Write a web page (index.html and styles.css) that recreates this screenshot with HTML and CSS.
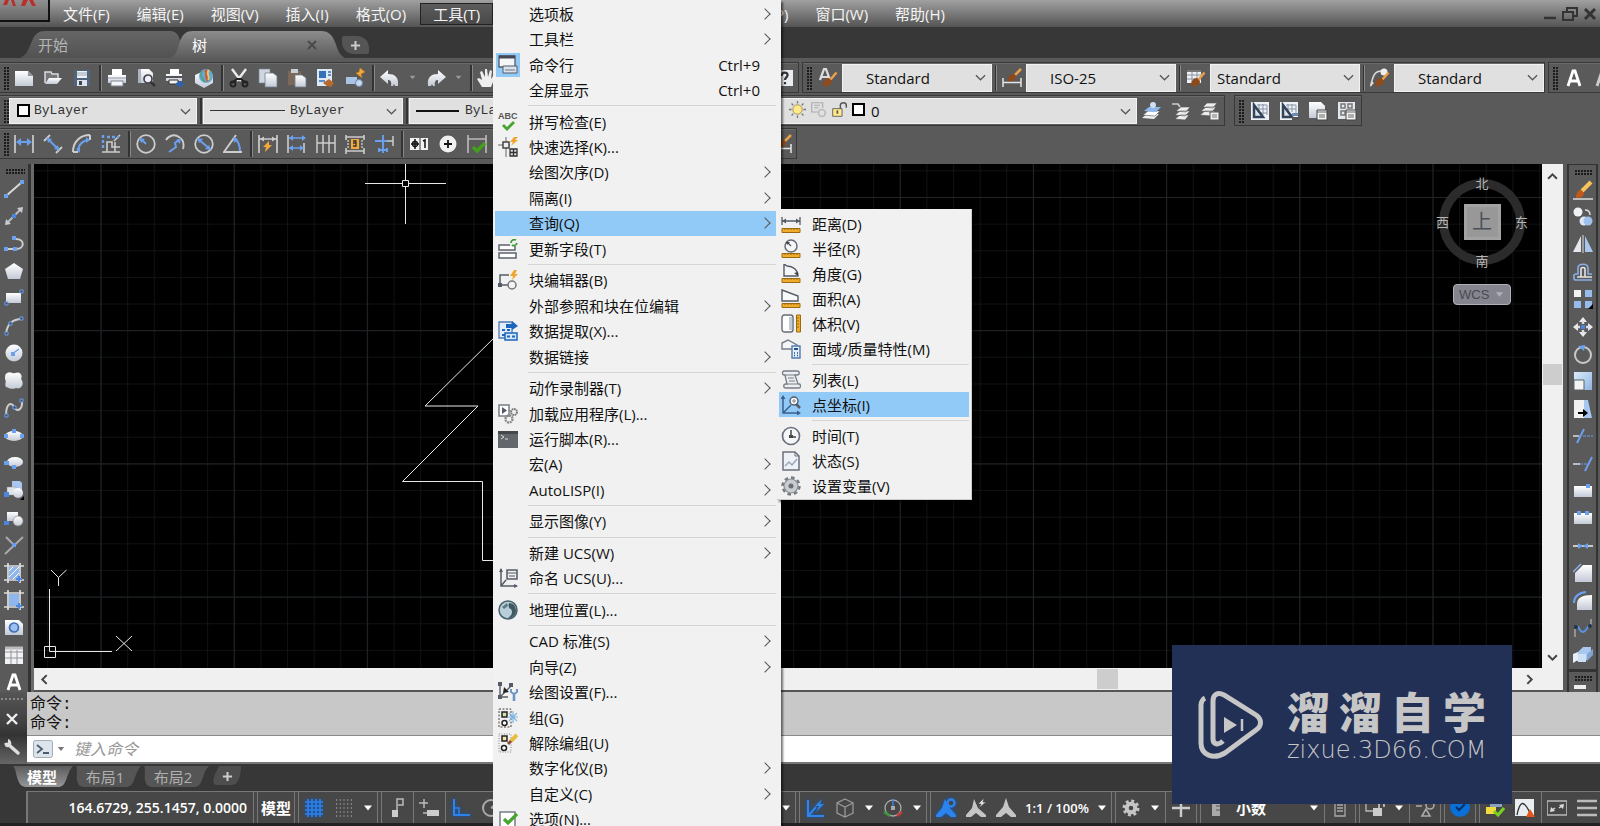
FILE: index.html
```html
<!DOCTYPE html>
<html lang="zh-CN">
<head>
<meta charset="utf-8">
<title>CAD 工作区</title>
<link rel="stylesheet" href="styles.css">
</head>
<body>
<svg class="defs" aria-hidden="true">
  <defs>
    <linearGradient id="gw" x1="0" y1="0" x2="0" y2="1"><stop offset="0" stop-color="#fff"/><stop offset="1" stop-color="#c3cad6"/></linearGradient>
    <linearGradient id="gb" x1="0" y1="0" x2="1" y2="1"><stop offset="0" stop-color="#dcebfb"/><stop offset="1" stop-color="#8db4e2"/></linearGradient>
    <linearGradient id="tabOn" x1="0" y1="0" x2="0" y2="1"><stop offset="0" stop-color="#8c8c8c"/><stop offset="1" stop-color="#5c5c5c"/></linearGradient>
    <linearGradient id="tabOff" x1="0" y1="0" x2="0" y2="1"><stop offset="0" stop-color="#666"/><stop offset="1" stop-color="#525252"/></linearGradient>
    <linearGradient id="tabLow" x1="0" y1="0" x2="0" y2="1"><stop offset="0" stop-color="#5c5c5c"/><stop offset="1" stop-color="#969696"/></linearGradient>
  </defs>
  <!-- common -->
  <symbol id="chev" viewBox="0 0 12 12"><path d="M1 3.500l5 5 5-5" fill="none" stroke="#555" stroke-width="1.300"/></symbol>
  <symbol id="tri" viewBox="0 0 10 10"><path d="M1 2.500h8l-4 5z" fill="currentColor"/></symbol>
  <symbol id="plus" viewBox="0 0 12 12"><path d="M6 1v10M1 6h10" stroke="#ccc" stroke-width="2.200"/></symbol>
  <symbol id="brush" viewBox="0 0 20 20"><path d="M18.500 4.500l-6 7" stroke="#e8a04a" stroke-width="2.500"/><path d="M5 18c0-5 2-8 6-8l3 3c0 4-4 6-9 5z" fill="#8d4a1c"/></symbol>
  <!-- standard toolbar -->
  <symbol id="new" viewBox="0 0 20 20"><path d="M1 3h13l5 5v10H1z" fill="url(#gw)"/><path d="M14 3v5h5" fill="#8f959d"/></symbol>
  <symbol id="open" viewBox="0 0 20 20"><path d="M2 15V4h6l1 2h6v4" fill="#777" stroke="#d7dde5" stroke-width="1.500"/><path d="M2 16l4-6h13l-5 6z" fill="url(#gw)"/></symbol>
  <symbol id="save" viewBox="0 0 20 20"><path d="M2 2h16v16H2z" fill="#50647c"/><path d="M5 3h10v7H5z" fill="#eef1f5"/><path d="M5 5h10M5 7h10" stroke="#9aa6b5"/><path d="M5 12h10v6H5z" fill="#dfe4ea"/><path d="M7 13h3v4H7z" fill="#384656"/></symbol>
  <symbol id="print" viewBox="0 0 20 20"><path d="M5 1h10v6H5z" fill="#fff"/><path d="M1 7h18v8H1z" fill="url(#gw)"/><path d="M1 10h18" stroke="#8e98a5"/><path d="M4 13h12v5H4z" fill="#f4f6f8" stroke="#7c8795"/></symbol>
  <symbol id="preview" viewBox="0 0 20 20"><path d="M2 1h11l4 4v10H2z" fill="url(#gw)"/><path d="M2 1h3v14H2" fill="#aab3bf"/><circle cx="12" cy="11" r="4" fill="#eef" stroke="#444" stroke-width="1.700"/><path d="M15 14l4 4" stroke="#333" stroke-width="2.500"/></symbol>
  <symbol id="plot" viewBox="0 0 20 20"><path d="M5 1h9v5H5z" fill="#fff"/><path d="M1 6h16v7H1z" fill="url(#gw)"/><path d="M1 9h16" stroke="#222" stroke-width="1.500"/><path d="M4 12h9v4H4z" fill="#f2f2f2" stroke="#333"/><path d="M11 16h8M15 13v6" stroke="#2b64b5" stroke-width="2.500"/></symbol>
  <symbol id="globe" viewBox="0 0 20 20"><path d="M1 7l9-4 9 4v8l-9 5-9-5z" fill="url(#gw)"/><circle cx="12" cy="8" r="7" fill="#65a7d8"/><path d="M11 2c4 3-1 5 3 11" stroke="#d9542b" stroke-width="2.500" fill="none"/><path d="M15 2c-4 4 2 6-1 10" stroke="#f2cf4a" stroke-width="1.700" fill="none"/><path d="M8 3c-3 4 0 7 3 11" stroke="#4da36a" stroke-width="1.500" fill="none"/></symbol>
  <symbol id="cut" viewBox="0 0 20 20"><path d="M3 1l9 12M17 1L8 13" stroke="#e8e8e8" stroke-width="2.500"/><path d="M3 15l5-4h4l5 4" stroke="#222" stroke-width="2" fill="none"/><circle cx="4" cy="16" r="2.500" fill="none" stroke="#222" stroke-width="1.900"/><circle cx="16" cy="16" r="2.500" fill="none" stroke="#222" stroke-width="1.900"/></symbol>
  <symbol id="copy" viewBox="0 0 20 20"><path d="M1 1h11v14H1z" fill="#cfd6df" stroke="#7a8695" stroke-width=".7"/><path d="M7 5h8l4 3v11H7z" fill="url(#gw)" stroke="#6f7b8a" stroke-width=".8"/></symbol>
  <symbol id="paste" viewBox="0 0 20 20"><path d="M1 3h13v14H1z" fill="#7b6858"/><path d="M4 1h7v4H4z" fill="#c9cfd6"/><path d="M8 7h7l4 3v9H8z" fill="url(#gw)" stroke="#6f7b8a" stroke-width=".8"/></symbol>
  <symbol id="match" viewBox="0 0 20 20"><path d="M1 1h15v17H1z" fill="#dfe9f5"/><path d="M3 3h7v7H3z" fill="#3270b8"/><path d="M12 4h3M12 7h3M3 13h6" stroke="#3270b8" stroke-width="1.500"/><path d="M7 15l6-4 5 4-3 4-4-1z" fill="#b7692b"/></symbol>
  <symbol id="blk" viewBox="0 0 20 20"><path d="M1 9h11v7H1z" fill="#aac4e6"/><circle cx="14" cy="15" r="3.500" fill="#c9d9ee" stroke="#6b88b0"/><path d="M15 0l5 4-4 2 1 4-6-5 3-1z" fill="#f3a83a" stroke="#c97a16" stroke-width=".6"/></symbol>
  <symbol id="undo" viewBox="0 0 20 20"><path d="M0 9l8-7v4c7 0 11 3 10 12h-3l-1-2-1 2h-2c1-5-1-6-3-6v4z" fill="url(#gw)"/></symbol>
  <symbol id="redo" viewBox="0 0 20 20"><path d="M20 9l-8-7v4C5 6 1 9 2 18h3l1-2 1 2h2c-1-5 1-6 3-6v4z" fill="url(#gw)"/></symbol>
  <symbol id="hand" viewBox="0 0 20 20"><path d="M6 19L1 11l2-1 3 2L4 4l2-1 3 6V1h2l1 8 2-7 2 1-1 8 2-3 2 1-4 10z" fill="#eee"/></symbol>
  <symbol id="help" viewBox="0 0 20 20"><path d="M3 2h16v16H3z" fill="#e9edf2"/><path d="M7.500 8c0-5 7-4 6-.5C13 9.500 11 9.500 11 12M11 14v2.200" fill="none" stroke="#333" stroke-width="2.200"/></symbol>
  <symbol id="txtst" viewBox="0 0 20 20"><path d="M2 12L6 1h2l4 11M4 9h6" stroke="#ddd" stroke-width="2.200" fill="none"/><use href="#brush"/></symbol>
  <symbol id="dimst" viewBox="0 0 20 20"><path d="M1 10v9M19 10v9M1 14.500h18" stroke="#e5e5e5" stroke-width="1.500"/><path d="M19 1l-6 6" stroke="#e8a04a" stroke-width="2.500"/><path d="M6 13c0-5 2-7 6-7l2 2c0 4-3 6-8 5z" fill="#8d4a1c"/></symbol>
  <symbol id="tabst" viewBox="0 0 20 20"><path d="M1 2h14v13H1z" fill="#eef1f5"/><path d="M1 3h14" stroke="#777" stroke-width="2"/><path d="M1 7h14M1 11h14M6 4v11M11 4v11" stroke="#8992a0"/><use href="#brush"/></symbol>
  <symbol id="leadst" viewBox="0 0 20 20"><path d="M1 18C3 4 7 3 12 3" fill="none" stroke="#ddd" stroke-width="1.500"/><path d="M0 19l1-6 3 2z" fill="#ddd"/><circle cx="14" cy="4" r="3.500" fill="#eee"/><use href="#brush"/></symbol>
  <symbol id="bigA" viewBox="0 0 20 20"><path d="M4 18L9 3h2l5 15M6 13h8" stroke="currentColor" stroke-width="2.800" fill="none"/></symbol>
  <!-- layers -->
  <symbol id="lay1" viewBox="0 0 20 20"><path d="M0 17l5-4h12l-5 5z" fill="#eee"/><path d="M1 14l5-4h12l-5 5z" fill="#fff" stroke="#555" stroke-width=".6"/><path d="M2 10l5-4h12l-5 5z" fill="#8db8ec"/><circle cx="11" cy="4" r="3" fill="#cfe0f5"/></symbol>
  <symbol id="lay2" viewBox="0 0 20 20"><path d="M4 18l5-4h9l-4 5zM4 14l5-4h10l-5 5zM5 10l5-4h9l-4 5z" fill="#eee" stroke="#555" stroke-width=".6"/><path d="M1 3h6l2 3" fill="none" stroke="#ccc" stroke-width="1.700"/></symbol>
  <symbol id="lay3" viewBox="0 0 20 20"><path d="M0 14l5-4h10l-4 5zM1 10l5-4h10l-4 5zM3 6l4-4h10l-4 5z" fill="#eee" stroke="#555" stroke-width=".6"/><path d="M10 11h9v8h-9z" fill="#eee" stroke="#555"/><path d="M12 14h5M12 16h5" stroke="#777"/></symbol>
  <symbol id="sun" viewBox="0 0 20 20"><path d="M10 0v3M10 17v3M0 10h3M17 10h3M3 3l2 2M15 15l2 2M17 3l-2 2M3 17l2-2" stroke="#777" stroke-width="1.500"/><circle cx="10" cy="10" r="5.500" fill="#ffe98a" stroke="#9c8743"/></symbol>
  <symbol id="vp" viewBox="0 0 20 20"><path d="M2 2h13v6M2 2v11h7M5 5h7M5 8h5" fill="none" stroke="#aaa" stroke-width="1.300"/><circle cx="14" cy="14" r="4" fill="none" stroke="#bbb" stroke-width="2"/></symbol>
  <symbol id="lock" viewBox="0 0 20 20"><path d="M2 9h11v9H2z" fill="#ffe98a" stroke="#555"/><path d="M11 9V5c0-4 7-4 7 0v3" fill="none" stroke="#555" stroke-width="1.700"/><path d="M7.500 11v4" stroke="#555" stroke-width="2"/></symbol>
  <symbol id="ref1" viewBox="0 0 20 20"><path d="M1 1h18v18H1z" fill="#eef2f7"/><path d="M7 4h10v10M7 8h10M10 12h7M9 3v9M13 3v11" stroke="#8794a5" fill="none"/><path d="M4 4v12h9z" fill="#dde3ea" stroke="#34435a" stroke-width="2.500"/></symbol>
  <symbol id="ref2" viewBox="0 0 20 20"><path d="M1 1h18v18H1z" fill="#eef2f7"/><path d="M7 4h10v8M7 8h10M9 3v7M13 3v8" stroke="#8794a5" fill="none"/><path d="M4 4v12h9z" fill="#dde3ea" stroke="#34435a" stroke-width="2.500"/><path d="M13 12h6v3h-6z" fill="#6c8bb8"/><path d="M13 16h7v3h-7z" fill="#555"/></symbol>
  <symbol id="ref3" viewBox="0 0 20 20"><path d="M1 1h12l4 4v12H1z" fill="url(#gw)"/><path d="M9 9h10v10H9z" fill="#f4f4f4" stroke="#444"/><path d="M9 11h10M11 14h6M11 16h6" stroke="#666"/></symbol>
  <symbol id="ref4" viewBox="0 0 20 20"><path d="M1 1h17v17H1z" fill="#e4e8ee"/><path d="M4 3h4v4H4zM11 3h4v4h-4zM4 10h4v4H4z" fill="none" stroke="#777" stroke-width="1.500"/><path d="M9 9h10v10H9z" fill="#f4f4f4" stroke="#444"/><path d="M9 11h10M11 14h6M11 16h6" stroke="#666"/></symbol>
  <!-- dimension -->
  <symbol id="d1" viewBox="0 0 20 20"><path d="M1 1v18M19 1v18" stroke="#ccc" stroke-width="1.700"/><path d="M3 8h14" stroke="#6ba0ee" stroke-width="2"/><path d="M2 8l5-4v8zM18 8l-5-4v8z" fill="#6ba0ee"/></symbol>
  <symbol id="d2" viewBox="0 0 20 20"><path d="M1 7l6-6M13 19l6-6" stroke="#ccc" stroke-width="1.900"/><path d="M4 4l12 12" stroke="#6ba0ee" stroke-width="2"/><path d="M4 4l5 1-4 4zM16 16l-5-1 4-4z" fill="#6ba0ee"/></symbol>
  <symbol id="d3" viewBox="0 0 20 20"><path d="M1 18C1 8 8 1 18 1M1 18h5M18 1v5" stroke="#ccc" stroke-width="2" fill="none"/><path d="M6 17C6 11 11 6 17 6" stroke="#6ba0ee" stroke-width="2" fill="none"/><path d="M4 15l4-2v6zM14 3l4 3-4 3z" fill="#6ba0ee"/></symbol>
  <symbol id="d4" viewBox="0 0 20 20"><path d="M1 18h18M6 18V8h5v5h8M14 8v10M19 1l-6 6" stroke="#ccc" stroke-width="1.600" fill="none"/><path d="M2 1v14M6 3h12" stroke="#6ba0ee" stroke-width="2.400" stroke-dasharray="3 2"/></symbol>
  <symbol id="d5" viewBox="0 0 20 20"><circle cx="10" cy="10" r="8.800" fill="none" stroke="#ccc" stroke-width="1.800"/><path d="M10 10L5 5" stroke="#6ba0ee" stroke-width="2"/><path d="M3 4l6 1-4 4z" fill="#6ba0ee"/></symbol>
  <symbol id="d6" viewBox="0 0 20 20"><path d="M1 6c3-5 9-6 13-3 5 3 5 8 4 12" fill="none" stroke="#ccc" stroke-width="1.900"/><path d="M4 18l7-5-1-4 4-3" fill="none" stroke="#6ba0ee" stroke-width="2"/><path d="M16 4l-1 6-4-4z" fill="#6ba0ee"/></symbol>
  <symbol id="d7" viewBox="0 0 20 20"><circle cx="10" cy="10" r="8.800" fill="none" stroke="#ccc" stroke-width="1.800"/><path d="M4 5l12 10" stroke="#6ba0ee" stroke-width="2"/><path d="M3 4l6 1-4 4zM17 16l-6-1 4-4z" fill="#6ba0ee"/></symbol>
  <symbol id="d8" viewBox="0 0 20 20"><path d="M13 1L1 18h18" fill="none" stroke="#ccc" stroke-width="1.900"/><path d="M12 5c4 3 5 7 5 12" fill="none" stroke="#6ba0ee" stroke-width="2"/><path d="M10 3l5 2-4 4z" fill="#6ba0ee"/></symbol>
  <symbol id="d9" viewBox="0 0 20 20"><path d="M1 1v18M19 1v18M1 5h18" stroke="#ccc" stroke-width="1.700"/><path d="M2 5l4-2.500v5zM18 5l-4-2.500v5z" fill="#ccc"/><path d="M11 7l-6 6h3l-1 5 7-7h-3z" fill="#f3a83a"/></symbol>
  <symbol id="d10" viewBox="0 0 20 20"><path d="M1 1v18M17 9v10" stroke="#ccc" stroke-width="1.600"/><path d="M2 4h16M2 14h14" stroke="#6ba0ee" stroke-width="1.700"/><path d="M2 4l4-3v6zM19 4l-4-3v6zM2 14l4-3v6zM17 14l-4-3v6z" fill="#6ba0ee"/></symbol>
  <symbol id="d11" viewBox="0 0 20 20"><path d="M1 1v18M7 1v18M13 1v18M19 1v18M1 9h18" stroke="#ccc" stroke-width="1.500"/></symbol>
  <symbol id="d12" viewBox="0 0 20 20"><path d="M1 1v5M19 1v5M1 3h18M1 14v6M19 14v6M1 17h18" stroke="#ccc" stroke-width="1.600"/><path d="M6 5h8v10H6z" fill="#f3a83a"/><path d="M8 7h3v2h-3h3v3H8" stroke="#333" fill="none" stroke-width="1.300"/><path d="M3 6v8M17 6v8" stroke="#eee" stroke-dasharray="2 1"/></symbol>
  <symbol id="d13" viewBox="0 0 20 20"><path d="M9 1v18M1 7h12M5 14v4M13 14v4M5 16h8" stroke="#6ba0ee" stroke-width="1.900"/><path d="M19 2v10M13 7h6" stroke="#ccc" stroke-width="1.500"/></symbol>
  <symbol id="d14" viewBox="0 0 20 20"><path d="M1 4h18v12H1z" fill="#f2f2f2"/><path d="M11 4v12" stroke="#333"/><path d="M6 5v10M2 10h8M14 7l2-1v8" stroke="#111" stroke-width="1.500" fill="none"/><circle cx="6" cy="10" r="2.500" fill="none" stroke="#111" stroke-width="1.300"/></symbol>
  <symbol id="d15" viewBox="0 0 20 20"><circle cx="10" cy="10" r="8.500" fill="#f0f0f0"/><path d="M10 6v8M6 10h8" stroke="#111" stroke-width="1.800"/></symbol>
  <symbol id="d16" viewBox="0 0 20 20"><path d="M1 1v18M19 1v18M1 5h18" stroke="#bbb" stroke-width="1.600"/><path d="M6 13l4 4 8-8" stroke="#41a01c" stroke-width="3.500" fill="none"/></symbol>
  <!-- draw tools -->
  <symbol id="l1" viewBox="0 0 20 20"><path d="M2 17L18 3" stroke="#d5d8dc" stroke-width="2"/><path d="M0 15h4v4H0zM16 1h4v4h-4z" fill="#6ba0ee"/></symbol>
  <symbol id="l2" viewBox="0 0 20 20"><path d="M3 17L17 3" stroke="#b9bdc3" stroke-width="2"/><path d="M1 19l1-6 5 5zM19 1l-1 6-5-5z" fill="#c9ccd0"/><path d="M8 8h4v4H8z" fill="#4c86df"/></symbol>
  <symbol id="l3" viewBox="0 0 20 20"><path d="M2 15h10c9 0 9-10 0-10h-2" fill="none" stroke="#ccc" stroke-width="2"/><path d="M0 13h4v4H0zM9 13h4v4H9zM8 2h4v4H8z" fill="#6ba0ee"/></symbol>
  <symbol id="l4" viewBox="0 0 20 20"><path d="M10 2l9 6-3 10H4L1 8z" fill="url(#gw)"/></symbol>
  <symbol id="l5" viewBox="0 0 20 20"><path d="M2 5h15v10H2z" fill="url(#gw)"/><path d="M16 2h3v3h-3zM1 14h3v3H1z" fill="#445" stroke="#6ba0ee"/></symbol>
  <symbol id="l6" viewBox="0 0 20 20"><path d="M2 18C3 8 8 3 18 3" fill="none" stroke="#ccc" stroke-width="2"/><path d="M1 16h3v3H1zM5 6h3v3H5zM16 1h3v3h-3z" fill="#445" stroke="#6ba0ee"/></symbol>
  <symbol id="l7" viewBox="0 0 20 20"><circle cx="10" cy="10" r="8.500" fill="url(#gw)"/><path d="M8 11l7-5" stroke="#6ba0ee" stroke-width="1.500"/><path d="M7 9h4v4H7z" fill="#6ba0ee"/></symbol>
  <symbol id="l8" viewBox="0 0 20 20"><path d="M3 2c4-2 5 1 8 0 5-2 8 2 6 6 4 5 0 11-5 9-4 2-7 0-10-1-2-3 1-5-1-8 0-3 0-5 2-6z" fill="url(#gw)"/></symbol>
  <symbol id="l9" viewBox="0 0 20 20"><path d="M2 18C2 4 8 4 10 9s9 4 8-7" fill="none" stroke="#ccc" stroke-width="2"/><path d="M1 16h3v3H1zM9 8h3v3H9zM16 1h3v3h-3z" fill="#445" stroke="#6ba0ee"/></symbol>
  <symbol id="l10" viewBox="0 0 20 20"><ellipse cx="10" cy="10" rx="9" ry="5" fill="url(#gw)"/><path d="M0 8h4v4H0zM16 8h4v4h-4zM8 3h4v4H8z" fill="#6ba0ee"/></symbol>
  <symbol id="l11" viewBox="0 0 20 20"><ellipse cx="11" cy="9" rx="8" ry="5" fill="url(#gw)"/><path d="M0 8h5v4H0zM8 12h4v4H8z" fill="#6ba0ee"/></symbol>
  <symbol id="l12" viewBox="0 0 20 20"><path d="M8 1h8l2 2v7H8z" fill="#a9c6ee"/><path d="M3 7h9v8H3z" fill="#dfe4ea" stroke="#888" stroke-width=".5"/><circle cx="14" cy="13" r="5" fill="url(#gw)"/><path d="M0 12h5v5H0z" fill="#4c86df"/><path d="M20 16v4h-4z" fill="#000"/></symbol>
  <symbol id="l13" viewBox="0 0 20 20"><path d="M3 4h11v9H3z" fill="url(#gw)"/><circle cx="14" cy="13" r="5" fill="url(#gw)" stroke="#888" stroke-width=".7"/><path d="M0 13h5v4H0z" fill="#4c86df"/></symbol>
  <symbol id="l14" viewBox="0 0 20 20"><path d="M2 2l8 8M1 19L19 2" stroke="#aaa" stroke-width="2"/><path d="M8 8h4v4H8z" fill="#6ba0ee"/></symbol>
  <symbol id="l15" viewBox="0 0 20 20"><path d="M4 0v20M16 0v20M0 3h20M0 17h20" stroke="#ddd" stroke-width="1.700"/><path d="M5 4h10v12H5z" fill="#8fb7ee"/><path d="M5 8l4-4M5 14L15 4M9 16l6-6" stroke="#fff"/><path d="M15 13v6M12 16h6" stroke="#4c86df" stroke-width="2"/></symbol>
  <symbol id="l16" viewBox="0 0 20 20"><path d="M4 0v20M16 0v20M0 3h20M0 17h20" stroke="#ddd" stroke-width="1.700"/><path d="M5 4h10v12H5z" fill="#8fb7ee"/><path d="M15 13v6M12 16h6" stroke="#4c86df" stroke-width="2"/></symbol>
  <symbol id="l17" viewBox="0 0 20 20"><path d="M1 3h14l4 4v11H1z" fill="url(#gw)"/><circle cx="10" cy="10.500" r="4.500" fill="#9cc0ef" stroke="#3f6fb5" stroke-width="1.700"/></symbol>
  <symbol id="l18" viewBox="0 0 20 20"><path d="M1 2h18v17H1z" fill="#f2f2f2"/><path d="M1 3h18" stroke="#bbb" stroke-width="3"/><path d="M1 7h18M1 13h18M7 5v14M13 5v14" stroke="#8e949c"/></symbol>
  <!-- modify tools -->
  <symbol id="m1" viewBox="0 0 20 20"><path d="M0 19h20" stroke="#ddd" stroke-width="1.500"/><path d="M9 11l9-9" stroke="#f6c35c" stroke-width="4"/><path d="M3 18c0-5 2-8 5-8l3 3c0 3-3 5-8 5z" fill="#c4581b"/></symbol>
  <symbol id="m2" viewBox="0 0 20 20"><circle cx="5" cy="5" r="4.500" fill="#f0f2f5"/><circle cx="11" cy="14" r="4.500" fill="#dce6f4"/><circle cx="15" cy="14" r="4.500" fill="#9dc0ec"/><path d="M12 3c4 0 5 2 5 5" stroke="#ddd" fill="none" stroke-width="1.500"/></symbol>
  <symbol id="m3" viewBox="0 0 20 20"><path d="M8 2v16H0z" fill="#e4e8ee"/><path d="M12 2v16h8z" fill="#a8c6ee"/><path d="M10 1v18" stroke="#ddd"/></symbol>
  <symbol id="m4" viewBox="0 0 20 20"><path d="M19 18H3c-3 0-3-6 0-6h2V6c0-5 10-5 10 0v6h4" fill="none" stroke="#88aee4" stroke-width="1.600"/><path d="M19 15H4h4V7c0-2 4-2 4 0v8" fill="none" stroke="#e4e4e4" stroke-width="1.600"/></symbol>
  <symbol id="m5" viewBox="0 0 20 20"><path d="M1 1h7v7H1z" fill="#f2f2f2"/><path d="M12 1h7v7h-7zM1 12h7v7H1zM12 12h7v7h-7z" fill="#95bced"/><path d="M20 15v5h-5z" fill="#000"/></symbol>
  <symbol id="m6" viewBox="0 0 20 20"><path d="M10 0l4 5H6zM10 20l4-5H6zM0 10l5-4v8zM20 10l-5-4v8z" fill="#e8eaee"/><path d="M8 8h4v4H8z" fill="#4c86df"/><path d="M10 4v3M10 13v3M4 10h3M13 10h3" stroke="#ddd" stroke-width="2.500"/></symbol>
  <symbol id="m7" viewBox="0 0 20 20"><circle cx="10" cy="11" r="8" fill="none" stroke="#c9c9c9" stroke-width="2"/><path d="M5 2l7-1-1 6z" fill="#6ba0ee"/></symbol>
  <symbol id="m8" viewBox="0 0 20 20"><path d="M1 1h18v18H1z" fill="url(#gb)"/><path d="M1 9h10v10H1z" fill="#f4f4f4" stroke="#566"/></symbol>
  <symbol id="m9" viewBox="0 0 20 20"><path d="M1 1h10v18H1z" fill="#f2f2f2"/><path d="M11 1h4l4 18h-8z" fill="#a6c8f0"/><path d="M5 14h6" stroke="#000" stroke-width="2"/><path d="M10 10l5 4-5 4z" fill="#000"/></symbol>
  <symbol id="m10" viewBox="0 0 20 20"><path d="M0 10h6" stroke="#ddd" stroke-width="1.500"/><path d="M11 3L4 17" stroke="#6ba0ee" stroke-width="2"/><path d="M10 10h10" stroke="#6ba0ee" stroke-dasharray="3 1"/></symbol>
  <symbol id="m11" viewBox="0 0 20 20"><path d="M0 10h7" stroke="#ddd" stroke-width="1.500"/><path d="M19 3l-7 14" stroke="#6ba0ee" stroke-width="2"/><path d="M7 10h8" stroke="#6ba0ee" stroke-dasharray="3 1"/></symbol>
  <symbol id="m12" viewBox="0 0 20 20"><path d="M1 5h18v11H1z" fill="url(#gw)"/><path d="M13 3h4v4h-4z" fill="#6ba0ee"/></symbol>
  <symbol id="m13" viewBox="0 0 20 20"><path d="M1 5h18v11H1z" fill="url(#gw)"/><path d="M4 3h4v4H4zM12 3h4v4h-4z" fill="#6ba0ee"/></symbol>
  <symbol id="m14" viewBox="0 0 20 20"><path d="M0 10h20" stroke="#ddd" stroke-width="1.700"/><path d="M10 10L5 7v6zM10 10l5-3v6z" fill="#6ba0ee"/></symbol>
  <symbol id="m15" viewBox="0 0 20 20"><path d="M2 10l8-8h9v17H2z" fill="url(#gw)"/><path d="M0 9l8-8" stroke="#8db4ea" stroke-width="1.500"/></symbol>
  <symbol id="m16" viewBox="0 0 20 20"><path d="M4 19v-6c0-6 5-9 15-9v15z" fill="url(#gw)"/><path d="M1 12C1 5 5 2 13 1" stroke="#6ba0ee" stroke-width="2" fill="none"/></symbol>
  <symbol id="m17" viewBox="0 0 20 20"><path d="M2 19V11M18 1v8" stroke="#ccc"/><path d="M3 8c4 0 3 6 7 6s4-7 7-7" stroke="#5b93e6" stroke-width="1.800" fill="none"/><circle cx="3" cy="9" r="2" fill="#234"/><circle cx="17" cy="8" r="2" fill="#234"/></symbol>
  <symbol id="m18" viewBox="0 0 20 20"><path d="M4 8l6-6h8v5l-5 9H4z" fill="#a9c8f0"/><path d="M0 9l5-2v8l-5 3z" fill="#e7eef7"/><path d="M5 9h8v8H5z" fill="#cfe0f5"/><path d="M14 9l6-5v6l-6 6z" fill="#7ea4cf"/></symbol>
  <!-- main menu icons -->
  <symbol id="cmd" viewBox="0 0 20 20"><path d="M1 1h16v11H1z" fill="#f4f6f8" stroke="#555b66" stroke-width="1.300"/><path d="M1 2h16" stroke="#444a55" stroke-width="3"/><path d="M5 11h14v7H5z" fill="#d9e2ee" stroke="#555b66"/><path d="M7 15h10" stroke="#777"/></symbol>
  <symbol id="abc" viewBox="0 0 20 20"><text x="0" y="7" font-size="9" font-weight="700" font-family="Liberation Sans" fill="#555">ABC</text><path d="M5 13l4 4 7-7" stroke="#46a52f" stroke-width="2.800" fill="none"/></symbol>
  <symbol id="qs" viewBox="0 0 20 20"><path d="M8 0v20M0 8h12" stroke="#666"/><path d="M5 5h6v6H5z" fill="#eee" stroke="#444" stroke-width="1.500"/><path d="M16 0l-4 5h3l-2 4 7-6h-3l3-3z" fill="#f0a52e"/><path d="M12 12h7v7h-7zM12 15.500h7M15.500 12v7" fill="#ddd" stroke="#333" stroke-width="1.300"/></symbol>
  <symbol id="fld" viewBox="0 0 20 20"><path d="M1 6h16v5H1zM1 14h17v5H1z" fill="#fff" stroke="#5c626c" stroke-width="1.500"/><path d="M12 0h8v7h-8z" fill="#f1f1f1"/><path d="M13 4c0-3 3-4 5-3M19 4c-1 3-4 3-5 2" stroke="#3f9c35" stroke-width="1.800" fill="none"/></symbol>
  <symbol id="bed" viewBox="0 0 20 20"><path d="M2 15V5h9M2 15h9" stroke="#555b66" stroke-width="1.500" fill="none"/><circle cx="14" cy="15" r="4" fill="#f2f2f2" stroke="#777" stroke-width="1.500"/><path d="M0 13h4v4H0z" fill="#555b66"/><path d="M16 0l-4 6h3l-1 4 6-6h-3l2-4z" fill="#f0a52e"/></symbol>
  <symbol id="ext" viewBox="0 0 20 20"><path d="M1 1h13v16H1z" fill="#e4eefb" stroke="#4d79b5" stroke-width="1.300"/><path d="M4 9h3M9 9h3M4 14h3" stroke="#1c66c0" stroke-width="2.200"/><path d="M8 3h6V0l6 5-6 4V7H8z" fill="#1c66c0"/><path d="M7 12h12v7H7z" fill="#d7e8fb" stroke="#1c66c0" stroke-width="1.500"/><path d="M9 15.500h3M14 15.500h3" stroke="#1c66c0" stroke-width="2.200"/></symbol>
  <symbol id="app" viewBox="0 0 20 20"><path d="M1 1h10v11H1z" fill="#fff" stroke="#777d86" stroke-width="1.500"/><path d="M4 3l5 3.500L4 10z" fill="#555b66"/><circle cx="16" cy="8" r="3" fill="none" stroke="#777" stroke-width="2" stroke-dasharray="1.700 .6"/><circle cx="11" cy="15" r="3.500" fill="none" stroke="#888" stroke-width="2.400" stroke-dasharray="2 .7"/></symbol>
  <symbol id="scr" viewBox="0 0 20 20"><path d="M0 2h20v17H0z" fill="#63666b"/><path d="M0 2h20v3H0z" fill="#44474c"/><path d="M3 6l3 2-3 2M7 10h3" stroke="#ddd" fill="none"/></symbol>
  <symbol id="ucsn" viewBox="0 0 20 20"><path d="M3 1v17h16M3 18l5-6" stroke="#555b66" stroke-width="1.500" fill="none"/><path d="M3 0l2 4H1zM20 18l-4-2v4z" fill="#555b66"/><path d="M9 2h10v9H9z" fill="#eee" stroke="#555b66" stroke-width="1.500"/><path d="M9 5h10M11 8h6" stroke="#555b66"/></symbol>
  <symbol id="geo" viewBox="0 0 20 20"><circle cx="10" cy="10" r="9" fill="#b8ced8" stroke="#46606c" stroke-width="1.500"/><path d="M11 3c5 0 7 4 7 8s-5 8-8 7c4-3 5-6 3-9-2 0-3-3-2-6z" fill="#3f5862"/><path d="M4 7l5-4 1 3-4 3z" fill="#5f7a85"/></symbol>
  <symbol id="dset" viewBox="0 0 20 20"><path d="M2 1v14h8M2 15L13 4" stroke="#555b66" stroke-width="1.400" fill="none"/><path d="M0 0h4v4H0zM0 13h4v4H0zM11 1h4v4h-4z" fill="#555b66"/><path d="M5 11l1-6 5 5z" fill="#222"/><path d="M16 11v8" stroke="#6f95c4" stroke-width="2.600"/><path d="M13 7v3l3 2 3-2V7" stroke="#6f95c4" stroke-width="2" fill="none"/></symbol>
  <symbol id="grp" viewBox="0 0 20 20"><path d="M1 1h12v18H1z" fill="none" stroke="#444" stroke-dasharray="2 1.500"/><path d="M4 4h5v5H4z" fill="#cfe6a8" stroke="#222" stroke-width="1.500"/><circle cx="6.500" cy="15" r="2.500" fill="#fff" stroke="#222" stroke-width="1.500"/><path d="M15 3v12M9 9h11M11 5l8 8M19 5l-8 8" stroke="#7fb5de" stroke-width="1.200"/></symbol>
  <symbol id="ungrp" viewBox="0 0 20 20"><path d="M1 1h12v18H1z" fill="none" stroke="#888" stroke-dasharray="1 1.500"/><path d="M4 3h5v5H4z" fill="#f6e6a8" stroke="#222" stroke-width="1.500"/><circle cx="6" cy="15" r="2.500" fill="#fff" stroke="#222" stroke-width="1.500"/><path d="M10 11l4-4" stroke="#8d4a3c" stroke-width="3"/><path d="M13 8l6-6" stroke="#e6bd3e" stroke-width="4"/></symbol>
  <symbol id="opt" viewBox="0 0 20 20"><path d="M2 3h15v16H2z" fill="#fff" stroke="#777d86" stroke-width="1.500"/><path d="M6 10l4 4 9-9" stroke="#46a52f" stroke-width="3.200" fill="none"/></symbol>
  <!-- inquiry submenu icons -->
  <symbol id="rule" viewBox="0 0 20 20"><path d="M1 14.500h18v4H1z" fill="#f0ad2c" stroke="#9a6a10"/><path d="M4 15v1M7 15v1M10 15v1M13 15v1M16 15v1" stroke="#9a6a10"/></symbol>
  <symbol id="s1" viewBox="0 0 20 20"><path d="M1 3v8M19 3v8M1 7h18" stroke="#555b66" stroke-width="1.300"/><path d="M1 7l4-2.500v5zM19 7l-4-2.500v5z" fill="#555b66"/><use href="#rule"/></symbol>
  <symbol id="s2" viewBox="0 0 20 20"><circle cx="10" cy="7" r="6" fill="#f4f6f9" stroke="#666c77" stroke-width="1.500"/><path d="M10 7L7 4" stroke="#555" stroke-width="1.300"/><path d="M5 3h4L6 6z" fill="#444"/><use href="#rule"/></symbol>
  <symbol id="s3" viewBox="0 0 20 20"><path d="M3 0v12h14c0-6-5-10-11-10z" fill="#f4f6f9" stroke="#555b66" stroke-width="1.400"/><path d="M17 12l-4-3 4-1z" fill="#444"/><use href="#rule"/></symbol>
  <symbol id="s4" viewBox="0 0 20 20"><path d="M1 1l16 6v5H1z" fill="#f8f9fb" stroke="#555b66" stroke-width="1.400"/><use href="#rule"/></symbol>
  <symbol id="s5" viewBox="0 0 20 20"><rect x="1" y="1" width="11" height="17" rx="2.500" fill="#fff" stroke="#666c77" stroke-width="1.400"/><path d="M8 3h3v13H8z" fill="#c4cad4"/><path d="M15.500 1h4v17h-4z" fill="#f0ad2c" stroke="#9a6a10"/><path d="M16 4h2M16 7h2M16 10h2M16 13h2" stroke="#9a6a10"/></symbol>
  <symbol id="s6" viewBox="0 0 20 20"><path d="M1 10V4l6-3 9 5v4z" fill="#f4f6f9" stroke="#777d88" stroke-width="1.400"/><path d="M11 7h8v12h-8z" fill="#e4eefa" stroke="#5579aa" stroke-width="1.400"/><path d="M13 10h4" stroke="#23508c" stroke-width="2"/><path d="M13 14h1M16 14h1M13 16.500h1M16 16.500h1" stroke="#23508c" stroke-width="1.500"/></symbol>
  <symbol id="s7" viewBox="0 0 20 20"><path d="M3 1h13c3 0 3 4 0 4h-2l3 9h1c2 0 2 4 0 4H5c-3 0-3-4 0-4h1L4 5H3C1 5 1 1 3 1z" fill="#eceef1" stroke="#777d88" stroke-width="1.300"/><path d="M4 5h10M7 8h6M8 11h6M6 14h10" stroke="#777d88" stroke-width="1.200"/></symbol>
  <symbol id="s8" viewBox="0 0 20 20"><path d="M2 2v16h16M2 18l8-8" stroke="#3b5f8c" stroke-width="1.500" fill="none"/><path d="M2 0l2.500 4h-5zM20 18l-4-2.500v5z" fill="#3b5f8c"/><circle cx="13" cy="6" r="4" fill="#f4f9ff" stroke="#555b66" stroke-width="1.400"/><path d="M15 9l4 4" stroke="#555b66" stroke-width="2.500"/><path d="M11 6h4M13 4v4" stroke="#888"/></symbol>
  <symbol id="s9" viewBox="0 0 20 20"><circle cx="10" cy="10" r="8.500" fill="#f4f6f9" stroke="#6b717c" stroke-width="1.700"/><path d="M10 4v7h5" stroke="#444" stroke-width="1.500" fill="none"/><path d="M8 9h4v3H8z" fill="#444"/></symbol>
  <symbol id="s10" viewBox="0 0 20 20"><path d="M2 1h12l4 4v14H2z" fill="#eef1f6" stroke="#6b717c" stroke-width="1.500"/><path d="M14 1v4h4" fill="none" stroke="#6b717c"/><path d="M4 15l4-4 3 3 5-6" stroke="#9aa6b8" stroke-width="1.500" fill="none"/></symbol>
  <symbol id="gear" viewBox="0 0 20 20"><circle cx="10" cy="10" r="7" fill="none" stroke="currentColor" stroke-width="3" stroke-dasharray="2.900 2.600"/><circle cx="10" cy="10" r="4.300" fill="none" stroke="currentColor" stroke-width="4"/></symbol>
  <symbol id="s11" viewBox="0 0 20 20"><circle cx="10" cy="10" r="8.200" fill="none" stroke="#777b82" stroke-width="3" stroke-dasharray="3.500 2.900"/><circle cx="10" cy="10" r="7" fill="#c9ccd1" stroke="#8a8e95" stroke-width="1.200"/><circle cx="10" cy="10" r="2.500" fill="#6c7077"/></symbol>
  <!-- status bar -->
  <symbol id="b1" viewBox="0 0 20 20"><path d="M4 1v18M8 1v18M12 1v18M16 1v18M1 4h18M1 8h18M1 12h18M1 16h18" stroke="#2b83ee" stroke-width="1.600"/></symbol>
  <symbol id="b2" viewBox="0 0 20 20"><path d="M2 2h17M2 6h17M2 10h17M2 14h17M2 18h17" stroke="#bbb" stroke-width="1.200" stroke-dasharray="1.200 2.500"/></symbol>
  <symbol id="b3" viewBox="0 0 20 20"><path d="M10 19V1h6v6h-5" fill="none" stroke="#bbb" stroke-width="1.500"/><path d="M5 12h6v7H5z" fill="#ccc"/></symbol>
  <symbol id="b4" viewBox="0 0 20 20"><path d="M5 1v9M0 5h9M4 15h5" stroke="#bbb" stroke-width="1.500"/><path d="M8 12h12v6H8z" fill="#ccc"/></symbol>
  <symbol id="b5" viewBox="0 0 20 20"><path d="M3 1v16h16" fill="none" stroke="#2b83ee" stroke-width="2"/><path d="M3 10h5v7" fill="none" stroke="#2b83ee" stroke-width="1.500"/></symbol>
  <symbol id="b6" viewBox="0 0 20 20"><circle cx="10" cy="10" r="8" fill="none" stroke="#aaa" stroke-width="2"/><path d="M10 10h9M10 10l6-6" stroke="#aaa" stroke-width="1.500"/></symbol>
  <symbol id="b7" viewBox="0 0 20 20"><path d="M3 2v16h16M3 18L11 9" fill="none" stroke="#2f86ea" stroke-width="2"/><path d="M17 1l-7 7h4l-3 6 8-8h-4z" fill="#2f86ea"/></symbol>
  <symbol id="b8" viewBox="0 0 20 20"><path d="M10 1l8 4v10l-8 4-8-4V5zM2 5l8 4 8-4M10 9v10" fill="none" stroke="#999" stroke-width="1.300"/></symbol>
  <symbol id="b9" viewBox="0 0 20 20"><circle cx="10" cy="10" r="8" fill="none" stroke="#aaa" stroke-width="1.300"/><path d="M10 1v10" stroke="#3c82d8" stroke-width="1.500"/><path d="M8 8h4v4H8z" fill="#aaa"/><path d="M1 14l6 4" stroke="#3a9a3a" stroke-width="2.500"/><path d="M14 18l5-4" stroke="#c43b34" stroke-width="2.500"/></symbol>
  <symbol id="ann" viewBox="0 0 20 20"><path d="M10 0l3 9 7 8v2h-5l-5-4-5 4H0v-2l7-8z" fill="currentColor"/></symbol>
  <symbol id="b10" viewBox="0 0 20 20"><path d="M9 1l4 8 7 8v2h-5l-5-4-5 4H0v-2l6-7z" fill="#2b83ee"/><circle cx="15" cy="5" r="3.500" fill="#444" stroke="#2b83ee" stroke-width="2.500"/></symbol>
  <symbol id="b11" viewBox="0 0 20 20"><path d="M8 1l4 9 8 7v2h-5l-5-4-5 4H0v-2l6-7z" fill="#c5c5c5"/><path d="M18 0l-6 6h3l-2 4 7-6h-3z" fill="#ddd" stroke="#474747" stroke-width=".6"/></symbol>
  <symbol id="b12" viewBox="0 0 20 20"><path d="M10 1v18M1 10h18" stroke="#ccc" stroke-width="2.400"/></symbol>
  <symbol id="b13" viewBox="0 0 20 20"><path d="M6 1h8v17H6z" fill="#aaa"/><path d="M10 4h4M10 8h4M10 12h4" stroke="#555"/></symbol>
  <symbol id="b14" viewBox="0 0 20 20"><path d="M5 3h10v15H5z" fill="none" stroke="#aaa" stroke-width="1.300"/><path d="M7 7h6M7 10h6M7 13h6" stroke="#aaa" stroke-width="1.300"/></symbol>
  <symbol id="b15" viewBox="0 0 20 20"><path d="M1 1v12h7" fill="none" stroke="#bbb" stroke-width="1.300"/><path d="M8 10h9v8H8z" fill="#ccc"/><path d="M14 10V7c0-4 5-4 5 0v2" fill="none" stroke="#ccc" stroke-width="1.600"/></symbol>
  <symbol id="b16" viewBox="0 0 20 20"><path d="M1 8h6M7 18l4-7 4 7z" fill="none" stroke="#aaa" stroke-width="1.600"/><circle cx="15" cy="7" r="4" fill="none" stroke="#aaa" stroke-width="1.600"/></symbol>
  <symbol id="b17" viewBox="0 0 20 20"><circle cx="10" cy="9" r="10" fill="#0b6fd8"/><path d="M6 9l3 3 6-6" fill="none" stroke="#052f66" stroke-width="2"/></symbol>
  <symbol id="b18" viewBox="0 0 20 20"><path d="M5 1h12v8H5z" fill="#8aa0c0"/><path d="M1 9h10v7H1z" fill="#f2dc3c"/><path d="M9 13l4 4 6-7" fill="none" stroke="#7ad020" stroke-width="3"/></symbol>
  <symbol id="b19" viewBox="0 0 20 20"><path d="M0 1h19v17H0z" fill="#e8edf2"/><path d="M2 17C5 2 9 2 15 15" fill="none" stroke="#333" stroke-width="1.300"/><path d="M15 11l5 8h-9z" fill="#e2561c"/></symbol>
  <symbol id="b20" viewBox="0 0 20 20"><path d="M0 3h20v14H0z" fill="none" stroke="#bbb" stroke-width="1.600"/><path d="M3 14l1-5 4 4zM17 6l-1 5-4-4z" fill="#ddd"/><path d="M5 12l3-2M15 8l-3 2" stroke="#ddd" stroke-width="1.500"/></symbol>
  <symbol id="b21" viewBox="0 0 20 20"><path d="M0 3h20M0 10h20M0 17h20" stroke="#bbb" stroke-width="2.500"/></symbol>
</svg>

<div class="app">
  <header class="menubar">
    <button class="applogo" aria-label="应用程序菜单"><svg viewBox="0 0 48 20"><path d="M5 0h4L7 5H3zM11 0h3l2 6h-3zM23 0h5l-3 6h-4zM29 0h4l3 6h-4z" fill="#b8302c"/></svg></button>
    <nav class="menus">
      <button>文件(F)</button><button>编辑(E)</button><button>视图(V)</button><button>插入(I)</button><button>格式(O)</button><button class="is-open">工具(T)</button><button class="covered">绘图(D)</button><button class="covered">标注(N)</button><button class="covered">修改(M)</button><button>参数(P)</button><button>窗口(W)</button><button>帮助(H)</button>
    </nav>
    <div class="winctl">
      <button aria-label="最小化"><svg viewBox="0 0 16 16"><path d="M2 12h12" stroke="#333" stroke-width="2.500"/></svg></button>
      <button aria-label="还原"><svg viewBox="0 0 16 16"><path d="M5 5V2h10v8h-4M1 6h10v8H1z" fill="none" stroke="#333" stroke-width="2"/></svg></button>
      <button aria-label="关闭"><svg viewBox="0 0 16 16"><path d="M3 3l10 10M13 3L3 13" stroke="#333" stroke-width="3"/></svg></button>
    </div>
  </header>

  <div class="filetabs">
    <button class="ftab start"><svg class="shape" viewBox="0 0 160 27" preserveAspectRatio="none"><path d="M0 27c7-3 8-8 12-17 3-7 6-10 14-10h124c7 0 10 6 10 12v15z" fill="url(#tabOff)"/></svg><span>开始</span></button>
    <button class="ftab doc"><svg class="shape" viewBox="0 0 175 27" preserveAspectRatio="none"><path d="M0 27c7-3 7-8 10-17 3-7 6-10 13-10h128c8 0 11 4 14 11 3 8 4 13 10 16z" fill="url(#tabOn)"/></svg><span>树</span><svg class="x" viewBox="0 0 10 10"><path d="M1 1l8 8M9 1L1 9" stroke="#4a4a4a" stroke-width="2"/></svg></button>
    <button class="newtab" aria-label="新图形"><svg viewBox="0 0 12 12"><use href="#plus"/></svg></button>
  </div>

  <div class="toolbars">
    <div class="trow">
      <div class="tbar std"><i class="grip"></i>
        <button class="tb" aria-label="新建"><svg><use href="#new"/></svg></button><button class="tb" aria-label="打开"><svg><use href="#open"/></svg></button><button class="tb" aria-label="保存"><svg><use href="#save"/></svg></button><i class="sep"></i>
        <button class="tb" aria-label="打印"><svg><use href="#print"/></svg></button><button class="tb" aria-label="打印预览"><svg><use href="#preview"/></svg></button><button class="tb" aria-label="发布"><svg><use href="#plot"/></svg></button><button class="tb" aria-label="三维打印"><svg><use href="#globe"/></svg></button><i class="sep"></i>
        <button class="tb" aria-label="剪切"><svg><use href="#cut"/></svg></button><button class="tb" aria-label="复制"><svg><use href="#copy"/></svg></button><button class="tb" aria-label="粘贴"><svg><use href="#paste"/></svg></button><button class="tb" aria-label="特性匹配"><svg><use href="#match"/></svg></button><button class="tb" aria-label="块编辑器"><svg><use href="#blk"/></svg></button><i class="sep"></i>
        <button class="tb" aria-label="放弃"><svg><use href="#undo"/></svg></button><button class="dd" aria-label="放弃列表"><svg><use href="#tri"/></svg></button><button class="tb" aria-label="重做"><svg><use href="#redo"/></svg></button><button class="dd" aria-label="重做列表"><svg><use href="#tri"/></svg></button><i class="sep"></i>
        <button class="tb pan" aria-label="平移"><svg><use href="#hand"/></svg></button>
        <button class="tb last" aria-label="帮助"><svg><use href="#help"/></svg></button>
      </div>
      <div class="tbar styles"><i class="grip"></i>
        <button class="tb" aria-label="文字样式"><svg><use href="#txtst"/></svg></button>
        <div class="combo"><select class="ind" aria-label="文字样式"><option>Standard</option></select><svg><use href="#chev"/></svg></div><i class="sep"></i>
        <button class="tb" aria-label="标注样式"><svg><use href="#dimst"/></svg></button>
        <div class="combo"><select class="ind" aria-label="标注样式"><option>ISO-25</option></select><svg><use href="#chev"/></svg></div><i class="sep"></i>
        <button class="tb" aria-label="表格样式"><svg><use href="#tabst"/></svg></button>
        <div class="combo"><select aria-label="表格样式"><option>Standard</option></select><svg><use href="#chev"/></svg></div><i class="sep"></i>
        <button class="tb" aria-label="多重引线样式"><svg><use href="#leadst"/></svg></button>
        <div class="combo"><select class="ind" aria-label="多重引线样式"><option>Standard</option></select><svg><use href="#chev"/></svg></div>
      </div>
      <div class="tbar text"><i class="grip"></i><button class="tb white" aria-label="多行文字"><svg><use href="#bigA"/></svg></button><button class="tb" aria-label="单行文字"><svg><use href="#bigA"/></svg></button></div>
    </div>
    <div class="trow">
      <div class="tbar props"><i class="grip"></i>
        <div class="combo mono c1"><i class="swatch"></i><select aria-label="颜色"><option>ByLayer</option></select><svg><use href="#chev"/></svg></div><i class="sep"></i>
        <div class="combo mono c2"><i class="ln"></i><select aria-label="线型"><option>ByLayer</option></select><svg><use href="#chev"/></svg></div><i class="sep"></i>
        <div class="combo mono c3"><i class="ln thick"></i><select aria-label="线宽"><option>ByLayer</option></select><svg><use href="#chev"/></svg></div>
      </div>
      <div class="tbar layers"><i class="grip"></i><button class="tb" aria-label="图层特性"><svg><use href="#lay1"/></svg></button><button class="tb" aria-label="图层状态"><svg><use href="#lay2"/></svg></button>
        <div class="combo layer"><span class="marks"><svg><use href="#sun"/></svg><svg><use href="#vp"/></svg><svg><use href="#lock"/></svg><i class="swatch"></i></span><select aria-label="图层"><option>0</option></select><svg><use href="#chev"/></svg></div>
        <button class="tb" aria-label="置为当前图层"><svg><use href="#lay1"/></svg></button><button class="tb" aria-label="上一个图层"><svg><use href="#lay2"/></svg></button><button class="tb" aria-label="图层状态管理器"><svg><use href="#lay3"/></svg></button>
      </div>
      <div class="tbar refs"><i class="grip"></i><button class="tb" aria-label="编辑参照"><svg><use href="#ref1"/></svg></button><button class="tb" aria-label="添加到工作集"><svg><use href="#ref2"/></svg></button><button class="tb" aria-label="关闭参照"><svg><use href="#ref3"/></svg></button><button class="tb" aria-label="保存参照"><svg><use href="#ref4"/></svg></button></div>
    </div>
    <div class="trow">
      <div class="tbar dims"><i class="grip"></i>
        <button class="tb" aria-label="线性"><svg><use href="#d1"/></svg></button><button class="tb" aria-label="对齐"><svg><use href="#d2"/></svg></button><button class="tb" aria-label="弧长"><svg><use href="#d3"/></svg></button><button class="tb" aria-label="坐标"><svg><use href="#d4"/></svg></button><i class="sep"></i>
        <button class="tb" aria-label="半径"><svg><use href="#d5"/></svg></button><button class="tb" aria-label="折弯"><svg><use href="#d6"/></svg></button><button class="tb" aria-label="直径"><svg><use href="#d7"/></svg></button><button class="tb" aria-label="角度"><svg><use href="#d8"/></svg></button><i class="sep"></i>
        <button class="tb" aria-label="快速标注"><svg><use href="#d9"/></svg></button><button class="tb" aria-label="基线"><svg><use href="#d10"/></svg></button><button class="tb" aria-label="连续"><svg><use href="#d11"/></svg></button><button class="tb" aria-label="等距标注"><svg><use href="#d12"/></svg></button><button class="tb" aria-label="折断标注"><svg><use href="#d13"/></svg></button><i class="sep"></i>
        <button class="tb" aria-label="公差"><svg><use href="#d14"/></svg></button><button class="tb" aria-label="圆心标记"><svg><use href="#d15"/></svg></button><button class="tb" aria-label="检验"><svg><use href="#d16"/></svg></button>
        <button class="tb last" aria-label="标注样式管理"><svg><use href="#dimst"/></svg></button>
      </div>
    </div>
  </div>

  <main class="work">
    <aside class="vbar draw"><i class="hgrip"></i>
      <div class="vlist"><button aria-label="直线"><svg><use href="#l1"/></svg></button><button aria-label="构造线"><svg><use href="#l2"/></svg></button><button aria-label="多段线"><svg><use href="#l3"/></svg></button><button aria-label="多边形"><svg><use href="#l4"/></svg></button><button aria-label="矩形"><svg><use href="#l5"/></svg></button><button aria-label="圆弧"><svg><use href="#l6"/></svg></button><button aria-label="圆"><svg><use href="#l7"/></svg></button><button aria-label="修订云线"><svg><use href="#l8"/></svg></button><button aria-label="样条曲线"><svg><use href="#l9"/></svg></button><button aria-label="椭圆"><svg><use href="#l10"/></svg></button><button aria-label="椭圆弧"><svg><use href="#l11"/></svg></button><button aria-label="插入块"><svg><use href="#l12"/></svg></button><button aria-label="创建块"><svg><use href="#l13"/></svg></button><button aria-label="点"><svg><use href="#l14"/></svg></button><button aria-label="图案填充"><svg><use href="#l15"/></svg></button><button aria-label="渐变色"><svg><use href="#l16"/></svg></button><button aria-label="面域"><svg><use href="#l17"/></svg></button><button aria-label="表格"><svg><use href="#l18"/></svg></button><button class="white" aria-label="文字"><svg><use href="#bigA"/></svg></button></div>
    </aside>
    <section class="view">
      <div class="canvas">
        <svg class="drawing" viewBox="34 164 1508 504" preserveAspectRatio="xMinYMin slice" aria-label="图形">
          <defs>
            <pattern id="minor" x="100.500" y="197" width="26.640" height="26.640" patternUnits="userSpaceOnUse"><path d="M.5 0v27M0 .5h27" stroke="#0f1214"/></pattern>
            <pattern id="major" x="100.500" y="197" width="133.200" height="133.200" patternUnits="userSpaceOnUse"><path d="M.5 0v134M0 .5h134" stroke="#202427"/></pattern>
          </defs>
          <path d="M34 164h2000v900H34z" fill="url(#minor)"/><path d="M34 164h2000v900H34z" fill="url(#major)"/>
          <g fill="none" stroke="#e8e8e8">
            <path d="M500 332l-75 74h53l-75.500 75.500h80v79H500"/>
            <path d="M365 183.500h37M409 183.500h37M405.500 164v16M405.500 187v37M402.500 180.500h6v6h-6z"/>
            <path d="M49.500 589v57M55 651.500h57M44.500 646.500h11v11h-11zM49.500 646v5.500h6"/>
            <path d="M51 570l7.500 7.500 8-7.500M58.500 577.500V586M116 636l16 15M132 636l-16 15"/>
          </g>
        </svg>
        <div class="cube"><span class="n">北</span><span class="w">西</span><button class="top">上</button><span class="e">东</span><span class="s">南</span></div>
        <button class="wcs">WCS <svg><use href="#tri"/></svg></button>
      </div>
      <div class="hscroll"><svg viewBox="0 0 10 10"><path d="M7 1L3 5l4 4" fill="none" stroke="#444" stroke-width="1.800"/></svg><i></i><svg viewBox="0 0 10 10"><path d="M3 1l4 4-4 4" fill="none" stroke="#444" stroke-width="1.800"/></svg></div>
    </section>
    <div class="vscroll"><svg viewBox="0 0 10 10"><path d="M1 7l4-4 4 4" fill="none" stroke="#444" stroke-width="1.800"/></svg><i></i><svg viewBox="0 0 10 10"><path d="M1 3l4 4 4-4" fill="none" stroke="#444" stroke-width="1.800"/></svg></div>
    <aside class="vbar modify">
      <div class="vbox"><i class="hgrip"></i>
      <div class="vlist"><button aria-label="删除"><svg><use href="#m1"/></svg></button><button aria-label="复制对象"><svg><use href="#m2"/></svg></button><button aria-label="镜像"><svg><use href="#m3"/></svg></button><button aria-label="偏移"><svg><use href="#m4"/></svg></button><button aria-label="阵列"><svg><use href="#m5"/></svg></button><button aria-label="移动"><svg><use href="#m6"/></svg></button><button aria-label="旋转"><svg><use href="#m7"/></svg></button><button aria-label="缩放"><svg><use href="#m8"/></svg></button><button aria-label="拉伸"><svg><use href="#m9"/></svg></button><button aria-label="修剪"><svg><use href="#m10"/></svg></button><button aria-label="延伸"><svg><use href="#m11"/></svg></button><button aria-label="打断于点"><svg><use href="#m12"/></svg></button><button aria-label="打断"><svg><use href="#m13"/></svg></button><button aria-label="合并"><svg><use href="#m14"/></svg></button><button aria-label="倒角"><svg><use href="#m15"/></svg></button><button aria-label="圆角"><svg><use href="#m16"/></svg></button><button aria-label="光顺曲线"><svg><use href="#m17"/></svg></button><button aria-label="分解"><svg><use href="#m18"/></svg></button></div></div>
      <div class="vnext"><i class="hgrip"></i><i class="peek"></i></div>
    </aside>
  </main>

  <section class="command">
    <div class="cmdside"><i></i><button aria-label="关闭命令行"><svg viewBox="0 0 14 14"><path d="M2 2l10 10M12 2L2 12" stroke="#eee" stroke-width="2.400"/></svg></button><button aria-label="自定义"><svg viewBox="0 0 18 18"><path d="M6 7l9 8" stroke="#ddd" stroke-width="3.500" stroke-linecap="round"/><path d="M5 1v3.500L1.500 5C1 9 5 10 7 8.500S9 2 5 1z" fill="#ddd"/></svg></button></div>
    <div class="cmdmain">
      <div class="history"><p>命令:</p><p>命令:</p></div>
      <label class="entry"><svg class="prompt" viewBox="0 0 20 18"><rect x=".5" y=".5" width="19" height="17" rx="2" fill="#dde3ea" stroke="#a3adb8"/><path d="M4 5l5 4-5 4M10 13h6" fill="none" stroke="#4d5c6e" stroke-width="1.800"/></svg><svg class="dn"><use href="#tri"/></svg><input type="text" placeholder="键入命令" aria-label="键入命令"></label>
    </div>
  </section>

  <nav class="layouts">
    <button class="on"><svg class="shape" viewBox="0 0 60 21" preserveAspectRatio="none"><path d="M0 0h60c-4 4-5 9-7 14s-4 7-8 7H14c-5 0-7-2-9-7S3 3 0 0z" fill="url(#tabLow)"/></svg><span>模型</span></button>
    <button><svg class="shape" viewBox="0 0 68 21" preserveAspectRatio="none"><path d="M3 0h65c-4 4-5 9-7 14s-4 7-8 7H12c-5 0-7-2-8-7S5 3 3 0z" fill="#555"/></svg><span>布局1</span></button>
    <button><svg class="shape" viewBox="0 0 68 21" preserveAspectRatio="none"><path d="M3 0h65c-4 4-5 9-7 14s-4 7-8 7H12c-5 0-7-2-8-7S5 3 3 0z" fill="#555"/></svg><span>布局2</span></button>
    <button class="add" aria-label="新建布局"><svg class="shape" viewBox="0 0 28 21" preserveAspectRatio="none"><path d="M6 0h22c0 8-2 19-9 19H4C-1 19 0 14 2 8z" fill="#4e4e4e"/></svg><svg class="p"><use href="#plus"/></svg></button>
  </nav>

  <footer class="status">
    <div class="sgroup left">
      <output class="coords">164.6729, 255.1457, 0.0000</output><i class="s2"></i><button class="model">模型</button><i class="s2"></i>
      <button class="si glow" aria-label="栅格"><svg><use href="#b1"/></svg></button><button class="si" aria-label="捕捉"><svg><use href="#b2"/></svg></button><button class="sd" aria-label="捕捉选项"><svg><use href="#tri"/></svg></button><i class="s2"></i>
      <button class="si" aria-label="推断约束"><svg><use href="#b3"/></svg></button><i class="s1"></i><button class="si" aria-label="动态输入"><svg><use href="#b4"/></svg></button><i class="s1"></i><button class="si glow" aria-label="正交"><svg><use href="#b5"/></svg></button><button class="si" aria-label="极轴"><svg><use href="#b6"/></svg></button>
    </div>
    <div class="sgroup">
      <button class="sd" aria-label="选项"><svg><use href="#tri"/></svg></button><i class="s2"></i><button class="si glow" aria-label="动态 UCS"><svg><use href="#b7"/></svg></button><button class="si" aria-label="选择过滤"><svg><use href="#b8"/></svg></button><button class="sd" aria-label="过滤选项"><svg><use href="#tri"/></svg></button><button class="si" aria-label="小控件"><svg><use href="#b9"/></svg></button><button class="sd" aria-label="小控件选项"><svg><use href="#tri"/></svg></button><i class="s2"></i>
      <button class="si glow" aria-label="注释可见性"><svg><use href="#b10"/></svg></button><button class="si" aria-label="自动缩放"><svg><use href="#b11"/></svg></button><button class="si" aria-label="注释比例"><svg><use href="#ann"/></svg></button><button class="scale">1:1 / 100%</button><button class="sd" aria-label="比例列表"><svg><use href="#tri"/></svg></button><i class="s2"></i>
      <button class="si" aria-label="切换工作空间"><svg><use href="#gear"/></svg></button><button class="sd" aria-label="工作空间列表"><svg><use href="#tri"/></svg></button><i class="s1"></i><button class="si" aria-label="注释监视器"><svg><use href="#b12"/></svg></button><i class="s2"></i>
      <button class="si" aria-label="单位"><svg><use href="#b13"/></svg></button><button class="unit">小数</button><button class="sd" aria-label="单位列表"><svg><use href="#tri"/></svg></button><i class="s1"></i><button class="si" aria-label="快捷特性"><svg><use href="#b14"/></svg></button><i class="s2"></i>
      <button class="si" aria-label="锁定界面"><svg><use href="#b15"/></svg></button><button class="sd" aria-label="锁定选项"><svg><use href="#tri"/></svg></button><i class="s1"></i><button class="si" aria-label="隔离对象"><svg><use href="#b16"/></svg></button><i class="s2"></i>
      <button class="si" aria-label="硬件加速"><svg><use href="#b17"/></svg></button><i class="s2"></i><button class="si" aria-label="关联图形"><svg><use href="#b18"/></svg></button><button class="si" aria-label="通知"><svg><use href="#b19"/></svg></button><i class="s1"></i><button class="si" aria-label="全屏"><svg><use href="#b20"/></svg></button><button class="si" aria-label="自定义状态栏"><svg><use href="#b21"/></svg></button>
    </div>
  </footer>

  <ul class="menu tools" role="menu">
    <li class="more">选项板</li><li class="more">工具栏</li><li><svg class="mi checked"><use href="#cmd"/></svg>命令行<kbd>Ctrl+9</kbd></li><li>全屏显示<kbd>Ctrl+0</kbd></li><li class="line"></li>
    <li><svg class="mi"><use href="#abc"/></svg>拼写检查(E)</li><li><svg class="mi"><use href="#qs"/></svg>快速选择(K)...</li><li class="more">绘图次序(D)</li><li class="more">隔离(I)</li><li class="more hot">查询(Q)</li><li><svg class="mi"><use href="#fld"/></svg>更新字段(T)</li><li class="line"></li>
    <li><svg class="mi"><use href="#bed"/></svg>块编辑器(B)</li><li class="more">外部参照和块在位编辑</li><li><svg class="mi"><use href="#ext"/></svg>数据提取(X)...</li><li class="more">数据链接</li><li class="line"></li>
    <li class="more">动作录制器(T)</li><li><svg class="mi"><use href="#app"/></svg>加载应用程序(L)...</li><li><svg class="mi"><use href="#scr"/></svg>运行脚本(R)...</li><li class="more">宏(A)</li><li class="more">AutoLISP(I)</li><li class="line"></li>
    <li class="more">显示图像(Y)</li><li class="line"></li>
    <li class="more">新建 UCS(W)</li><li><svg class="mi"><use href="#ucsn"/></svg>命名 UCS(U)...</li><li class="line"></li>
    <li><svg class="mi"><use href="#geo"/></svg>地理位置(L)...</li><li class="line"></li>
    <li class="more">CAD 标准(S)</li><li class="more">向导(Z)</li><li><svg class="mi"><use href="#dset"/></svg>绘图设置(F)...</li><li><svg class="mi"><use href="#grp"/></svg>组(G)</li><li><svg class="mi"><use href="#ungrp"/></svg>解除编组(U)</li><li class="more">数字化仪(B)</li><li class="more">自定义(C)</li><li><svg class="mi"><use href="#opt"/></svg>选项(N)...</li>
  </ul>

  <ul class="menu inquiry" role="menu">
    <li><svg class="mi"><use href="#s1"/></svg>距离(D)</li><li><svg class="mi"><use href="#s2"/></svg>半径(R)</li><li><svg class="mi"><use href="#s3"/></svg>角度(G)</li><li><svg class="mi"><use href="#s4"/></svg>面积(A)</li><li><svg class="mi"><use href="#s5"/></svg>体积(V)</li><li><svg class="mi"><use href="#s6"/></svg>面域/质量特性(M)</li><li class="line"></li>
    <li><svg class="mi"><use href="#s7"/></svg>列表(L)</li><li class="hot"><svg class="mi"><use href="#s8"/></svg>点坐标(I)</li><li class="line"></li>
    <li><svg class="mi"><use href="#s9"/></svg>时间(T)</li><li><svg class="mi"><use href="#s10"/></svg>状态(S)</li><li><svg class="mi"><use href="#s11"/></svg>设置变量(V)</li>
  </ul>

  <aside class="brand">
    <svg class="play" viewBox="0 0 66 68"><path d="M25 50c-5 5-10 3-10-2V10c0-7 5-9 11-6l32 20c6 4 6 11 0 15L27 62C15 69 3 64 3 52V14c0-3 2-6 4-7" fill="none" stroke="#c6c6c6" stroke-width="5"/><path d="M26 26l13 8-13 8z" fill="#c6c6c6"/><path d="M44 28v12" stroke="#c6c6c6" stroke-width="2.500"/></svg>
    <div class="words"><div class="cn"><span>溜</span><span>溜</span><span>自</span><span>学</span></div><div class="url">zixue.3D66.COM</div></div>
  </aside>
</div>
</body>
</html>
```
FILE: styles.css
```css
* { box-sizing: border-box; }
html, body { margin: 0; height: 100%; overflow: hidden; }
body { font-family: "Open Sans", "Noto Sans CJK SC", sans-serif; font-size: 15px; line-height: 20px; background: #373737; }
button, select, input { font: inherit; color: inherit; margin: 0; padding: 0; border: 0; background: none; border-radius: 0; }
i { font-style: normal; }
ul, p { margin: 0; padding: 0; list-style: none; }
svg { display: block; flex: none; }
.defs { position: absolute; width: 0; height: 0; }
.app { position: relative; display: flex; flex-direction: column; height: 100vh; overflow: hidden; }

/* menu bar */
.menubar { display: flex; flex: none; height: 27px; background: linear-gradient(#a0a0a0, #545454); color: #f4f4f4; }
.applogo { width: 50px; height: 22px; flex: none; background: linear-gradient(#909090, #666); border-right: 2px solid #111; border-bottom: 2px solid #111; overflow: hidden; }
.applogo svg { width: 48px; height: 20px; }
.menus { display: flex; flex: 1; gap: 1px; padding-top: 3px; }
.menus button { padding: 0 13px; height: 22px; line-height: 20px; white-space: nowrap; }
.menus .is-open { background: linear-gradient(#5c5c5c, #484848); border: 1px solid #222; padding: 0 12px; line-height: 18px; }
.menus .covered { visibility: hidden; }
.winctl { display: flex; align-items: center; gap: 4px; padding-right: 2px; }
.winctl svg { width: 16px; height: 16px; }

/* drawing tabs */
.filetabs { display: flex; flex: none; align-items: flex-end; height: 31px; padding-left: 20px; background: #373737; }
.ftab { position: relative; display: flex; align-items: center; height: 27px; color: #b5b5b5; text-align: left; }
.ftab span { position: relative; }
.shape { position: absolute; left: 0; top: 0; width: 100%; height: 100%; }
.start { width: 160px; padding-left: 18px; }
.doc { width: 175px; margin-left: -10px; padding: 0 28px 0 22px; justify-content: space-between; color: #fff; }
.doc .x { position: relative; width: 10px; height: 10px; }
.newtab { width: 27px; height: 18px; margin: 0 0 4px -3px; padding-left: 8px; background: #555; border-radius: 2px 12px 2px 12px; }
.newtab svg { width: 11px; height: 11px; }

/* toolbars */
.toolbars { display: flex; flex: none; flex-direction: column; gap: 2px; height: 106px; padding-top: 4px; background: #5a5a5a; overflow: hidden; }
.trow { display: flex; flex: none; height: 31px; }
.tbar { display: flex; flex: none; align-items: center; border: 1px solid #383838; border-left: 0; box-shadow: inset 0 1px #6a6a6a; }
.grip { flex: none; width: 9px; height: 24px; background: repeating-linear-gradient(#5a5a5a 0 1px, transparent 1px 3px), repeating-linear-gradient(90deg, #5a5a5a 0 1px, #1c1c1c 1px 3px); border-left: 3px solid #5a5a5a; }
.tb { display: flex; flex: none; align-items: center; justify-content: center; width: 29px; height: 28px; color: #ccc; }
.tb svg { width: 20px; height: 20px; }
.pan { width: 25px; }
.dd { width: 17px; display: flex; flex: none; justify-content: center; color: #999; }
.dd svg { width: 7px; height: 7px; }
.white { color: #fff; }
.sep { flex: none; width: 6px; height: 26px; border-right: 1px solid #888; border-left: 3px solid #5a5a5a; background: #333; }
.std { width: 799px; margin-right: 3px; }
.dims { width: 797px; }
.std .last, .dims .last { margin-left: auto; }
.styles, .text, .refs { border-left: 1px solid #383838; }
.styles { margin-right: 3px; }
.combo { position: relative; flex: none; width: 150px; height: 28px; }
.combo > svg { position: absolute; right: 6px; top: 8px; width: 11px; height: 11px; pointer-events: none; }
.combo select { appearance: none; width: 100%; height: 100%; padding-left: 6px; background: #e0e0e0; border: 1px solid #f2f2f2; color: #111; }
.combo select.ind { padding-left: 23px; }
.styles .grip, .text .grip, .refs .grip { width: 10px; }
.styles .sep { width: 5px; }
.text { flex: 1 0 auto; }
.combo.mono select { font-family: "Liberation Mono", monospace; font-size: 13px; padding-left: 24px; color: #333; }
.combo.c1 { width: 188px; height: 26px; }
.combo.c2, .combo.c3 { width: 200px; height: 26px; }
.combo.mono.c2 select { padding-left: 86px; }
.combo.mono.c3 select { padding-left: 55px; }
.swatch { width: 13px; height: 13px; border: 2px solid #000; background: #fff; }
.c1 .swatch { position: absolute; left: 8px; top: 6px; }
.ln { position: absolute; left: 7px; top: 12px; width: 75px; height: 1px; background: #333; }
.ln.thick { width: 43px; height: 2px; background: #111; }
.props { width: 699px; margin-right: 10px; }
.layers { margin-right: 9px; }
.combo.layer { width: 361px; height: 26px; }
.combo.layer select { padding-left: 94px; }
.marks { position: absolute; left: 13px; top: 3px; display: flex; align-items: center; gap: 4px; }
.marks svg { width: 17px; height: 17px; }

/* workspace */
.work { display: flex; flex: 1; min-height: 0; background: #5a5a5a; }
.vbar { display: flex; flex: none; flex-direction: column; }
.draw { width: 34px; padding-right: 3px; border-right: 3px solid #6a6a6a; box-shadow: inset -3px 0 #333; overflow: hidden; }
.hgrip { flex: none; height: 6px; margin: 4px 3px 1px 5px; background: repeating-linear-gradient(90deg, #5a5a5a 0 1px, transparent 1px 3px), repeating-linear-gradient(#5a5a5a 0 1px, #1c1c1c 1px 3px); }
.vlist { display: flex; flex: 1; flex-direction: column; }
.draw .vlist { margin-bottom: -4px; }
.vlist button { display: flex; flex: 1; min-height: 0; align-items: center; justify-content: center; }
.vlist svg { width: 20px; height: 20px; }
.modify { width: 37px; padding: 0 2px 0 4px; }
.vbox { display: flex; flex-direction: column; height: 506px; flex: none; border: 1px solid #333; border-width: 1px 2px; }
.vnext { flex: 1; border: 2px solid #333; border-bottom: 0; overflow: hidden; }
.vnext .hgrip { display: block; margin-top: 3px; }
.peek { display: block; width: 12px; height: 4px; margin: 4px 0 0 5px; background: #eee; }
.view { display: flex; flex: 1; min-width: 0; flex-direction: column; }
.canvas { position: relative; flex: 1; min-height: 0; background: #000; overflow: hidden; }
.drawing { width: 100%; height: 100%; }
.hscroll { display: flex; flex: none; align-items: center; justify-content: space-between; height: 24px; padding: 0 7px 0 5px; background: #f0f0f0; border-bottom: 2px solid #555; }
.hscroll svg, .vscroll svg { width: 11px; height: 11px; }
.hscroll i { width: 21px; height: 20px; margin-left: 640px; background: #cdcdcd; }
.vscroll { display: flex; flex: none; flex-direction: column; align-items: center; width: 21px; padding: 7px 0 27px; background: #f0f0f0; border-bottom: 2px solid #555; }
.vscroll i { width: 19px; height: 21px; margin: 182px 0 auto; background: #cdcdcd; }
.cube { position: absolute; right: 17px; top: 15px; width: 86px; height: 86px; border: 9px solid #2b2b2b; border-radius: 50%; display: flex; align-items: center; justify-content: center; font-size: 13px; line-height: 14px; color: #b5b5b5; }
.cube .top { width: 37px; height: 36px; background: #989898; border: 3px solid #a3a3a3; color: #4a505a; font-size: 20px; line-height: 26px; }
.cube span { position: absolute; }
.cube .n { top: -12px; } .cube .s { bottom: -12px; } .cube .w { left: -12px; } .cube .e { right: -12px; }
.wcs { position: absolute; right: 31px; top: 120px; display: flex; align-items: center; justify-content: space-between; width: 58px; height: 21px; padding: 0 6px 0 5px; border: 1px solid #b0b0b8; border-radius: 4px; background: #85858f; color: #4a4a50; font: 13px "Liberation Sans", sans-serif; }
.wcs svg { width: 9px; height: 9px; color: #b0b0b8; }

/* command line */
.command { display: flex; flex: none; height: 72px; }
.cmdside { display: flex; flex: none; flex-direction: column; align-items: center; justify-content: space-between; width: 27px; padding: 6px 4px 8px 1px; background: linear-gradient(#555 0, #3f3f3f 45%, #333 60%, #666); }
.cmdside i { width: 22px; border-top: 2px dotted #888; }
.cmdside svg { width: 14px; height: 14px; }
.cmdside button:last-child svg { width: 18px; height: 18px; }
.cmdmain { display: flex; flex: 1; flex-direction: column; }
.history { flex: none; height: 44px; padding: 4px 3px 0; background: #c8c8c8; border-bottom: 1px solid #8a8a8a; color: #111; font-family: "Liberation Mono", "Noto Sans CJK SC", monospace; font-size: 16px; line-height: 19px; }
.entry { display: flex; flex: 1; align-items: center; gap: 4px; padding-left: 6px; background: #fff; border-bottom: 2px solid #777; }
.prompt { width: 20px; height: 18px; }
.dn { width: 8px; height: 8px; color: #777; }
.entry input { flex: 1; padding-left: 5px; outline: 0; font-size: 16px; font-style: italic; height: 24px; }
.entry input::placeholder { color: #999; opacity: 1; }

/* layout tabs */
.layouts { display: flex; flex: none; height: 27px; padding: 2px 0 4px 13px; background: #373737; color: #b0b0b0; }
.layouts button { position: relative; width: 68px; height: 21px; line-height: 20px; padding-right: 4px; }
.layouts span { position: relative; }
.layouts .on { width: 60px; color: #fff; font-weight: 700; padding-right: 2px; }
.layouts .add { display: flex; align-items: center; justify-content: center; width: 28px; margin-left: 4px; padding: 0; }
.layouts .p { position: relative; width: 11px; height: 11px; }

/* status bar */
.status { display: flex; flex: none; height: 35px; padding-left: 26px; border-bottom: 3px solid #222; color: #fff; background: #373737; }
.sgroup { display: flex; flex: 1; align-items: center; height: 32px; background: #474747; border-top: 1px solid #777; overflow: hidden; }
.sgroup.left { flex: none; width: 751px; border-left: 2px solid #777; }
.coords { width: 225px; padding-right: 6px; text-align: right; font-size: 14px; font-weight: 600; white-space: nowrap; }
.model { width: 36px; font-weight: 600; white-space: nowrap; }
.s2 { flex: none; width: 5px; height: 32px; border: 1px solid #777; border-width: 0 1px; background: #474747; }
.s1 { flex: none; width: 2px; height: 32px; border-right: 1px solid #777; }
.si, .sd { display: flex; flex: none; align-items: center; justify-content: center; width: 30px; color: #c5c5c5; }
.si svg { width: 20px; height: 20px; }
.sd { width: 18px; color: #fff; }
.sd svg { width: 10px; height: 10px; }
.glow svg { filter: drop-shadow(0 0 2px #1058b8); }
.scale { flex: none; width: 72px; font-size: 13px; font-weight: 600; white-space: nowrap; }
.unit { flex: none; width: 74px; padding-left: 5px; text-align: left; font-weight: 600; }

/* drop-down menus */
.menu { position: absolute; display: flex; flex-direction: column; background: #f1f1f1; color: #111; box-shadow: 2px 2px 2px #0008; }
.menu li { position: relative; display: flex; flex: 1; align-items: center; min-height: 0; padding-left: 34px; white-space: nowrap; }
.menu .line { flex: none; height: 6px; padding: 0; }
.menu .line::after { content: ""; flex: 1; margin-left: 33px; border-top: 1px solid #d5d5d5; }
.menu .hot { background: #91c9f7; }
.menu kbd { margin-left: auto; padding-right: 16px; font: inherit; }
.mi { position: absolute; left: 3px; width: 20px; height: 20px; }
.mi.checked { left: 1px; width: 24px; height: 24px; padding: 2px; background: #91c9f7; }
.more::after { content: ""; width: 7px; height: 7px; margin-left: auto; margin-right: 7px; border: solid #555; border-width: 1px 1px 0 0; transform: rotate(45deg); }
.tools { left: 493px; top: 0; bottom: -6px; width: 288px; padding: 1px 5px 0 2px; }
.inquiry { left: 777px; top: 209px; width: 195px; padding: 2px 2px 1px; border: 1px solid #ccc; border-width: 0 1px 1px 0; }
.inquiry li { flex: none; height: 25px; padding-left: 33px; }
.inquiry .mi { left: 2px; }

/* watermark card */
.brand { position: absolute; right: 88px; bottom: 22px; display: flex; align-items: center; width: 340px; height: 159px; padding: 0 0 0 26px; background: #223055; color: #c6c6c6; }
.play { width: 66px; height: 68px; }
.words { margin-left: 23px; }
.cn { display: flex; gap: 9px; font-size: 43px; line-height: 50px; font-weight: 900; }
.url { font: 200 24px/24px "DejaVu Sans", sans-serif; }
```
